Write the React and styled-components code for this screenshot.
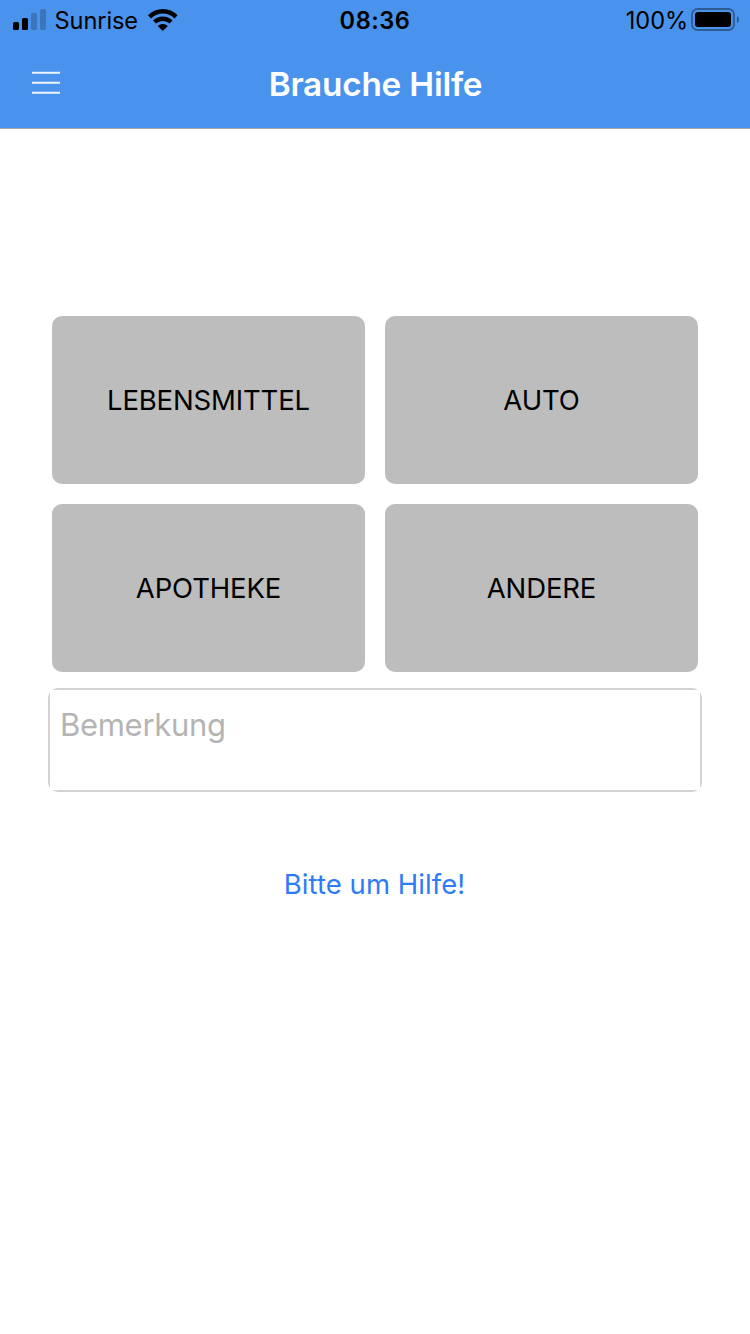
import React from "react";
import styled, { createGlobalStyle } from "styled-components";

const GlobalStyle = createGlobalStyle`
  * { box-sizing: border-box; }
  body {
    margin: 0;
    background: #fff;
    font-family: Inter, "Liberation Sans", sans-serif;
  }
  button { font: inherit; border: 0; padding: 0; cursor: pointer; }
`;

const Screen = styled.div`
  display: flex;
  flex-direction: column;
  width: 750px;
  height: 1334px;
  overflow: hidden;
  background: #fff;
`;

const Header = styled.header`
  height: 129px;
  background: #4a93ec;
  border-bottom: 1px solid #a7a9ac;
`;

const StatusBar = styled.div`
  display: grid;
  grid-template-columns: 1fr auto 1fr;
  grid-template-rows: 40px;
  align-items: center;
  height: 40px;
  padding: 0 11px;
  color: #000;
`;

const StatusGroup = styled.div`
  display: flex;
  align-items: center;
  justify-content: ${(p) => (p.$end ? "flex-end" : "flex-start")};
  padding-left: ${(p) => (p.$end ? "0" : "2px")};
`;

const StatusText = styled.span`
  font-size: 23.6px;
  line-height: 41px;
  font-weight: ${(p) => (p.$strong ? 570 : 380)};
  letter-spacing: ${(p) => p.$spacing || "0"};
  white-space: nowrap;
`;

const Carrier = styled(StatusText)`
  margin: 0 10px 0 7.5px;
`;

const Charge = styled(StatusText)`
  margin-right: 3px;
`;

const NavBar = styled.nav`
  display: grid;
  grid-template-columns: 92px 1fr 92px;
  align-items: center;
  height: 88px;
`;

const MenuButton = styled.button`
  display: flex;
  padding: 0 0 2px 32px;
  background: none;
`;

const Title = styled.h1`
  margin: 0;
  padding: 1px 0 0 1px;
  font-size: 33.3px;
  line-height: 87px;
  font-weight: 555;
  letter-spacing: -0.2px;
  text-align: center;
  color: #fff;
`;

const Main = styled.main`
  display: flex;
  flex-direction: column;
  padding: 187px 48px 0;
`;

const Categories = styled.div`
  display: grid;
  grid-template-columns: 1fr 1fr;
  grid-auto-rows: 168px;
  gap: 20px;
  padding: 0 4px;
`;

const Category = styled.button`
  border-radius: 10px;
  background: #bdbdbd;
  color: #000;
  font-size: 27.5px;
  font-weight: 380;
  letter-spacing: -0.15px;
`;

const NoteFrame = styled.div`
  height: 104px;
  margin-top: 16px;
  border-radius: 10px;
  overflow: hidden;
`;

const Note = styled.textarea`
  display: block;
  width: 100%;
  height: 100%;
  margin: 0;
  padding: 15px 10px;
  border: 2px solid #d2d2d2;
  border-radius: 0;
  outline: 0;
  resize: none;
  background: #fff;
  font: 380 31px/40px Inter, "Liberation Sans", sans-serif;
  letter-spacing: -0.3px;
  &::placeholder { color: #b4b4b4; opacity: 1; }
`;

const Submit = styled.button`
  align-self: center;
  margin-top: 72px;
  padding-right: 1px;
  height: 40px;
  background: none;
  color: #2f7bf6;
  font-size: 27.5px;
  font-weight: 380;
  letter-spacing: 0.05px;
  line-height: 40px;
`;

const SignalIcon = () => (
  <svg width="34" height="22" viewBox="0 0 34 22">
    <rect x="0" y="13" width="6" height="8" rx="1.6" />
    <rect x="9" y="9" width="6" height="12" rx="1.6" />
    <rect x="18" y="4" width="6" height="17" rx="1.6" opacity="0.2" />
    <rect x="27" y="0" width="6" height="21" rx="1.6" opacity="0.2" />
  </svg>
);

const WifiIcon = () => (
  <svg width="30" height="22" viewBox="0 0 30 22">
    <path d="M0 6.3C8.2-2.1 21.8-2.1 29.6 6.3L26.6 9.4C20 3 9.8 3 3 9.4Z" />
    <path d="M5 11.5C10.5 6 19.1 6 24.6 11.5L21.5 14.6C17.8 11 11.8 11 8.1 14.6Z" />
    <path d="M9.7 17C12.6 14.2 17 14.2 19.9 17L14.8 22Z" />
  </svg>
);

const BatteryIcon = () => (
  <svg width="48" height="24" viewBox="0 0 48 24">
    <rect x="1" y="1" width="42" height="21" rx="5.5" fill="none" stroke="#000" strokeWidth="1.8" opacity="0.38" />
    <rect x="4" y="4" width="36" height="15" rx="3" />
    <path d="M46 8C48.4 9 48.4 14 46 15Z" opacity="0.42" />
  </svg>
);

const MenuIcon = () => (
  <svg width="28" height="24" viewBox="0 0 28 24" stroke="#fff" strokeWidth="2" opacity="0.9">
    <path d="M0 1.8H28M0 11.8H28M0 21.8H28" />
  </svg>
);

const categories = ["LEBENSMITTEL", "AUTO", "APOTHEKE", "ANDERE"];

export default function App() {
  return (
    <Screen>
      <GlobalStyle />
      <Header>
        <StatusBar>
          <StatusGroup>
            <SignalIcon />
            <Carrier $spacing="-0.1px">Sunrise</Carrier>
            <WifiIcon />
          </StatusGroup>
          <StatusText $strong $spacing="0.5px">08:36</StatusText>
          <StatusGroup $end>
            <Charge $spacing="-0.1px">100%</Charge>
            <BatteryIcon />
          </StatusGroup>
        </StatusBar>
        <NavBar>
          <MenuButton aria-label="Menü"><MenuIcon /></MenuButton>
          <Title>Brauche Hilfe</Title>
        </NavBar>
      </Header>
      <Main>
        <Categories>
          {categories.map((label) => (
            <Category key={label}>{label}</Category>
          ))}
        </Categories>
        <NoteFrame><Note placeholder="Bemerkung" /></NoteFrame>
        <Submit>Bitte um Hilfe!</Submit>
      </Main>
    </Screen>
  );
}
